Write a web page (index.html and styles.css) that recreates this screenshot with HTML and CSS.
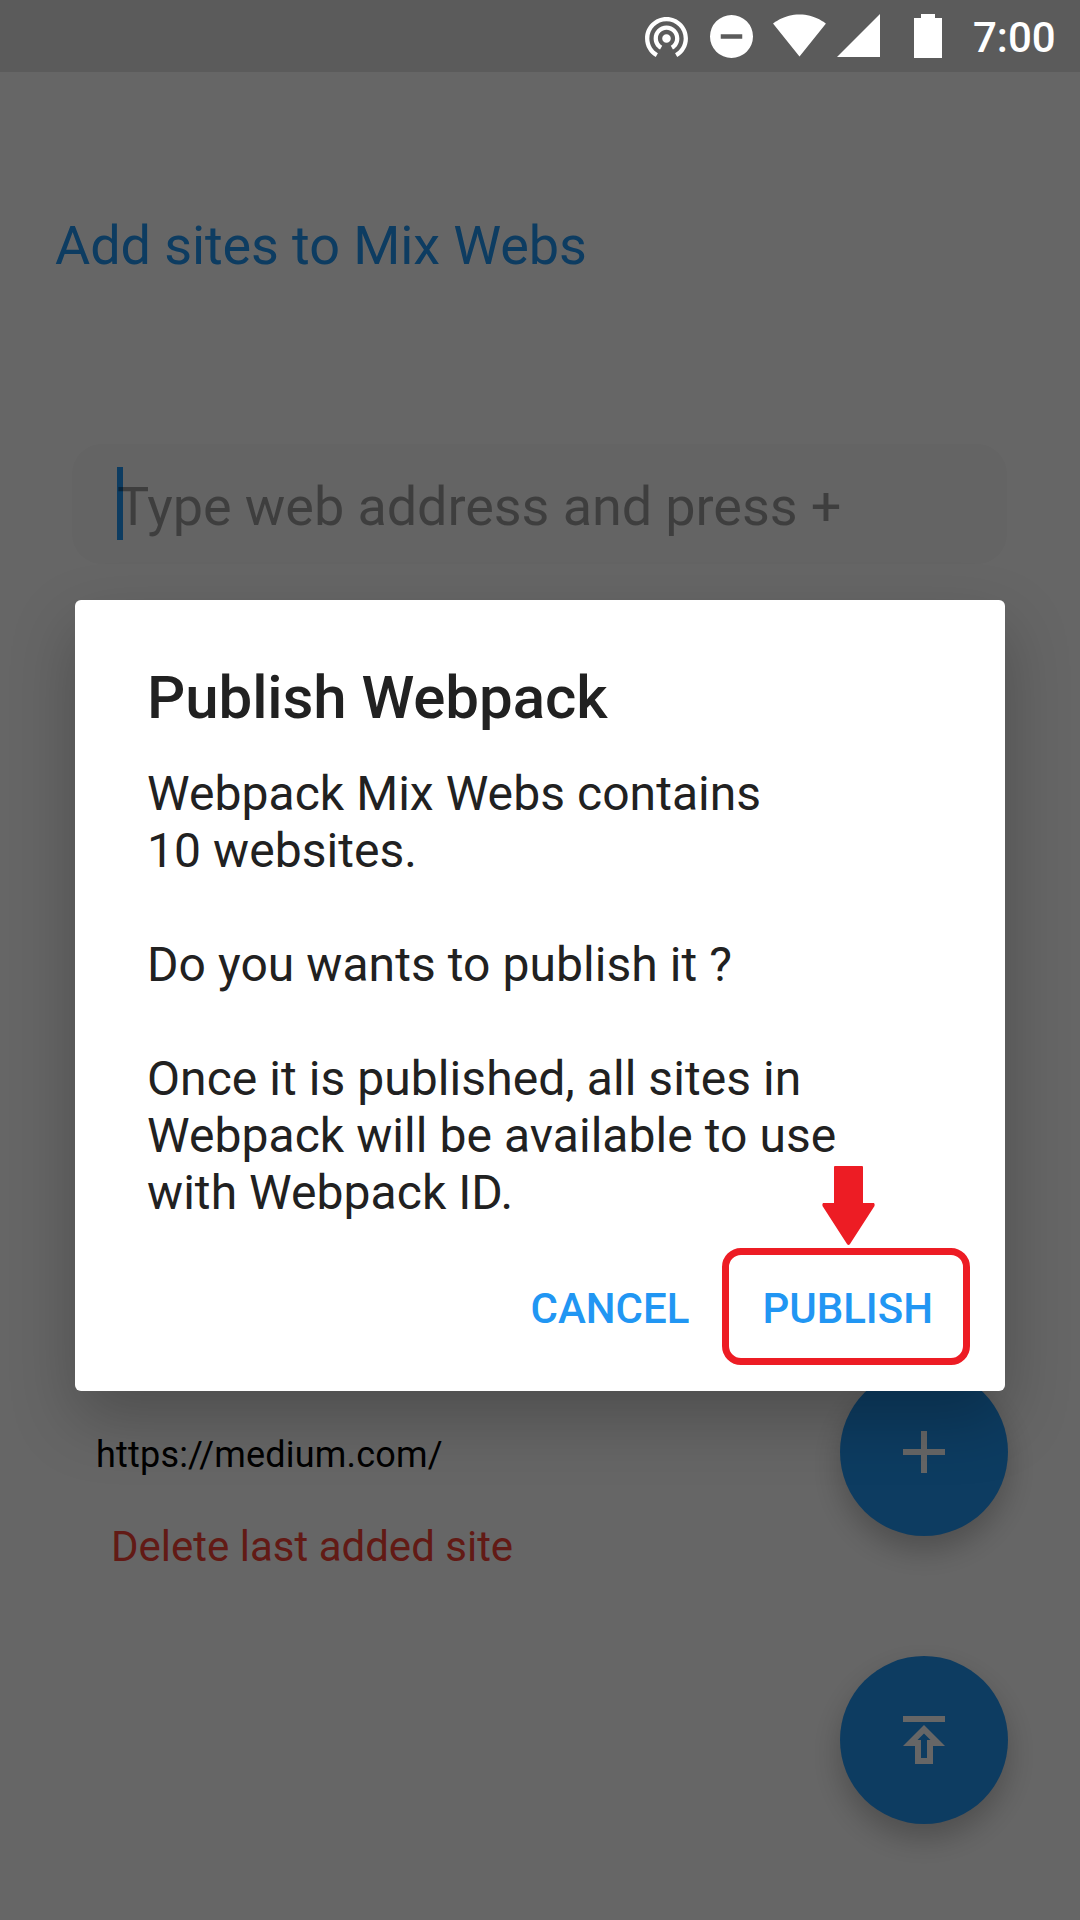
FILE: index.html
```html
<!DOCTYPE html>
<html lang="en">
<head>
<meta charset="utf-8">
<title>Mix Webs</title>
<link rel="stylesheet" href="styles.css">
</head>
<body>
<div class="screen">
  <main class="page">
    <h1 class="page-title">Add sites to Mix Webs</h1>
    <div class="field"><span class="caret"></span><span class="hint">Type web address and press +</span></div>
    <div class="lower">
      <div class="site-list">
        <p class="site-url">https://medium.com/</p>
        <p class="delete-link">Delete last added site</p>
      </div>
      <div class="fabs">
        <div class="fab">
          <svg viewBox="0 0 24 24"><path d="M19 13h-6v6h-2v-6H5v-2h6V5h2v6h6z"/></svg>
        </div>
        <div class="fab">
          <svg viewBox="0 0 24 24"><path d="M5 4v2h14V4H5zm0 10h4v6h6v-6h4l-7-7-7 7zm8-2v6h-2v-6H9.83L12 9.83 14.17 12H13z"/></svg>
        </div>
      </div>
    </div>
  </main>

  <div class="scrim">
    <section class="dialog">
      <h2 class="dialog-title">Publish Webpack</h2>
      <p class="dialog-text">Webpack Mix Webs contains<br>10 websites.<br><br>Do you wants to publish it ?<br><br>Once it is published, all sites in<br>Webpack will be available to use<br>with Webpack ID.</p>
      <div class="actions">
        <span class="action">CANCEL</span>
        <span class="action action-publish">PUBLISH
          <span class="callout"></span>
          <svg class="arrow" viewBox="0 0 53 80"><path d="M13 0h27q1 0 1 1v36h11q1 1 .5 3L28 78q-1.500 2-3 0L.5 40Q0 38 1 37h11V1q0-1 1-1z"/></svg>
        </span>
      </div>
    </section>
  </div>

  <header class="status-bar">
    <svg class="tether" viewBox="2 3 20 18.65"><path d="M12 11c-1.100 0-2 .9-2 2s.9 2 2 2 2-.9 2-2-.9-2-2-2zm6 2c0-3.310-2.690-6-6-6s-6 2.690-6 6c0 2.220 1.210 4.150 3 5.190l1-1.740c-1.190-.7-2-1.970-2-3.450 0-2.210 1.790-4 4-4s4 1.790 4 4c0 1.480-.81 2.750-2 3.450l1 1.740c1.790-1.040 3-2.970 3-5.190zM12 3C6.480 3 2 7.480 2 13c0 3.700 2.010 6.920 4.990 8.650l1-1.730C5.610 18.530 4 15.960 4 13c0-4.420 3.580-8 8-8s8 3.580 8 8c0 2.960-1.610 5.530-4 6.920l1 1.730c2.990-1.730 5-4.950 5-8.650 0-5.520-4.480-10-10-10z"/></svg>
    <svg class="dnd" viewBox="2 2 20 20"><path d="M12 2a10 10 0 1 0 0 20 10 10 0 0 0 0-20zm5 11.100H7v-2.200h10z"/></svg>
    <svg class="wifi" viewBox="0.36 3 23.28 18.49"><path d="M12.010 21.490L23.640 7c-.45-.34-4.930-4-11.640-4C5.280 3 .81 6.660.36 7l11.630 14.490z"/></svg>
    <svg class="signal" viewBox="0 0 43 43"><path d="M0 43h43V0z"/></svg>
    <svg class="battery" viewBox="0 0 28 44"><path d="M7 0h14v4h7v40H0V4h7z"/></svg>
    <span class="clock">7:00</span>
  </header>
</div>
</body>
</html>
```
FILE: styles.css
```css
* {
  box-sizing: border-box;
  margin: 0;
  padding: 0;
}

body {
  font-family: Roboto, sans-serif;
  font-weight: 400;
}

svg {
  display: block;
  flex: none;
}

.screen {
  position: relative;
  width: 1080px;
  height: 1920px;
  overflow: hidden;
  background: #fff;
  white-space: nowrap;
}

/* App page under the dialog */
.page {
  display: flex;
  flex-direction: column;
  height: 100%;
  padding: 214px 72px 96px;
}

.page-title {
  margin-left: -17px;
  font-size: 54px;
  font-weight: 400;
  line-height: 64px;
  letter-spacing: -0.1px;
  color: #2196f3;
}

.field {
  display: flex;
  align-items: center;
  height: 120px;
  margin-top: 166px;
  margin-right: 1px;
  padding-left: 45px;
  border-radius: 30px;
  background: #fafafa;
}

.caret {
  width: 6px;
  height: 73px;
  margin-top: -1px;
  margin-right: -6px;
  background: #2196f3;
}

.hint {
  position: relative;
  padding-top: 5px;
  font-size: 54px;
  line-height: 64px;
  letter-spacing: -0.08px;
  color: rgba(0, 0, 0, 0.38);
}

.lower {
  display: flex;
  justify-content: space-between;
  margin-top: 804px;
}

.site-list {
  padding: 66px 0 0 24px;
}

.site-url {
  font-size: 36px;
  line-height: 42px;
  letter-spacing: 0.2px;
  color: #000;
}

.delete-link {
  margin: 46px 0 0 15px;
  font-size: 42px;
  line-height: 50px;
  color: #f44336;
}

.fabs {
  display: flex;
  flex-direction: column;
  gap: 120px;
}

.fab {
  display: flex;
  align-items: center;
  justify-content: center;
  width: 168px;
  height: 168px;
  border-radius: 50%;
  background: #2196f3;
  box-shadow: 0 14px 30px rgba(0, 0, 0, 0.24);
}

.fab svg {
  width: 72px;
  height: 72px;
  fill: #fff;
}

/* Dimmed layer and dialog */
.scrim {
  position: absolute;
  inset: 0;
  padding: 600px 75px 0;
  background: rgba(0, 0, 0, 0.6);
}

.dialog {
  height: 791px;
  padding: 63px 72px 0;
  border-radius: 6px;
  background: #fff;
  box-shadow: 0 28px 66px rgba(0, 0, 0, 0.24);
  color: #212121;
}

.dialog-title {
  font-size: 60px;
  font-weight: 500;
  line-height: 70px;
  letter-spacing: -0.08px;
}

.dialog-text {
  margin-top: 32px;
  font-size: 48px;
  line-height: 57px;
  letter-spacing: 0.06px;
}

.actions {
  display: flex;
  justify-content: flex-end;
  gap: 73px;
  margin-top: 63px;
}

.action {
  position: relative;
  font-size: 42px;
  font-weight: 500;
  line-height: 50px;
  color: #2196f3;
}

/* Red highlight drawn over the publish button */
.callout {
  position: absolute;
  left: -40px;
  top: -36px;
  width: 248px;
  height: 117px;
  border: 7px solid #ed1c24;
  border-radius: 19px;
}

.arrow {
  position: absolute;
  left: 60px;
  top: -118px;
  width: 53px;
  height: 80px;
  fill: #ed1c24;
}

/* System status bar */
.status-bar {
  position: absolute;
  inset: 0 0 auto;
  display: flex;
  height: 72px;
  padding-left: 645px;
  background: rgba(0, 0, 0, 0.1);
  color: #fff;
}

.status-bar svg {
  fill: #fff;
}

.tether {
  width: 43px;
  height: 40px;
  margin-top: 17px;
}

.dnd {
  width: 43px;
  height: 43px;
  margin: 15px 0 0 22px;
}

.wifi {
  width: 53px;
  height: 43px;
  margin: 14px 0 0 20px;
}

.signal {
  width: 43px;
  height: 43px;
  margin: 14px 0 0 11px;
}

.battery {
  width: 28px;
  height: 44px;
  margin: 14px 0 0 34px;
}

.clock {
  margin: 13px 0 0 31px;
  font-size: 42px;
  font-weight: 500;
  line-height: 50px;
}
```
